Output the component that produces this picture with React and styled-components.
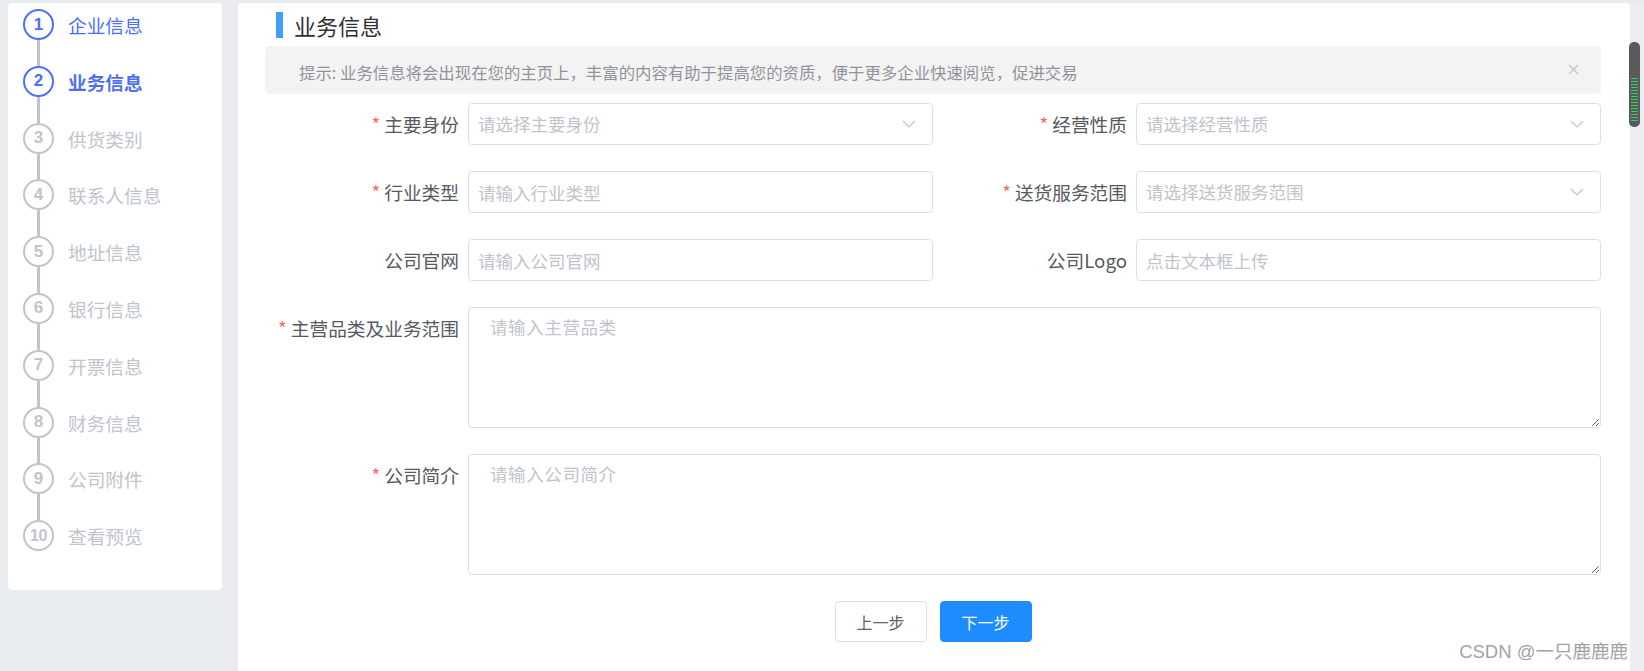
import React from "react";
import styled, { createGlobalStyle } from "styled-components";

const BLUE = "#4f6ef6";
const GREY = "#c0c4cc";

const GlobalStyle = createGlobalStyle`
  * { box-sizing: border-box; }
  html, body {
    margin: 0;
    padding: 0;
    background: #e9ecef;
    font-family: "Noto Sans CJK SC", "Liberation Sans", sans-serif;
  }
`;

const Page = styled.div`
  position: relative;
  display: flex;
  align-items: flex-start;
  height: 671px;
  padding: 3px 0 0 8px;
  overflow: hidden;
`;

/* left steps */
const Sidebar = styled.aside`
  width: 214px;
  height: 587px;
  flex-shrink: 0;
  background: #fff;
  border-radius: 4px;
  padding: 6px 0 0 15px;
`;

const Step = styled.div`
  display: flex;
  gap: 14px;
`;

const Track = styled.div`
  display: flex;
  flex-direction: column;
  align-items: center;
  width: 31px;
`;

const Circle = styled.div`
  width: 31px;
  height: 31px;
  border-radius: 50%;
  border: 2px solid ${(p) => (p.$on ? BLUE : GREY)};
  color: ${(p) => (p.$on ? BLUE : GREY)};
  display: flex;
  align-items: center;
  justify-content: center;
  font-family: "Liberation Sans", Arial, sans-serif;
  font-weight: bold;
  font-size: ${(p) => (p.$wide ? "16px" : "17px")};
  letter-spacing: ${(p) => (p.$wide ? "-0.5px" : "0")};
  background: #fff;
`;

const Connector = styled.div`
  width: 3px;
  height: 25.8px;
  background: ${GREY};
`;

const StepLabel = styled.div`
  line-height: 31px;
  font-size: 18.7px;
  color: ${(p) => (p.$on ? BLUE : GREY)};
  font-weight: ${(p) => (p.$active ? 700 : 400)};
`;

/* main card */
const Main = styled.main`
  width: 1392px;
  height: 668px;
  margin-left: 16px;
  flex-shrink: 0;
  background: #fff;
  border-radius: 4px 4px 0 0;
  padding: 9px 29px 0 27px;
`;

const TitleRow = styled.div`
  display: flex;
  align-items: center;
  gap: 11px;
  height: 26px;
  margin-left: 11px;
`;

const TitleBar = styled.span`
  width: 7px;
  height: 26px;
  background: #409eff;
`;

const Title = styled.h2`
  margin: 0;
  font-size: 22px;
  line-height: 26px;
  font-weight: 400;
  color: #303133;
`;

const Alert = styled.div`
  display: flex;
  align-items: flex-start;
  height: 48px;
  margin-top: 8px;
  padding: 15px 22px 0 34px;
  background: #f3f3f3;
  border-radius: 5px;
`;

const AlertText = styled.div`
  flex: 1;
  font-size: 16.4px;
  line-height: 22px;
  color: #909399;
`;

const CloseBtn = styled.span`
  display: flex;
  align-items: center;
  height: 22px;
  margin-top: -3px;
  cursor: pointer;
`;

const Form = styled.div`
  display: grid;
  grid-template-columns: 1fr 1fr;
  row-gap: 26px;
  margin-top: 9px;
`;

const Item = styled.div`
  display: flex;
  align-items: flex-start;
  grid-column: ${(p) => (p.$full ? "1 / span 2" : "auto")};
`;

const Label = styled.label`
  width: 203px;
  height: 42px;
  flex-shrink: 0;
  padding-right: 9px;
  text-align: right;
  font-size: 18.7px;
  line-height: 42px;
  color: #555a61;
  white-space: nowrap;
`;

const Star = styled.span`
  color: #f56c6c;
  margin-right: 4px;
`;

const Input = styled.input`
  flex: 1;
  min-width: 0;
  height: 42px;
  padding: 0 9px;
  border: 1px solid #dcdfe6;
  border-radius: 4px;
  font-family: inherit;
  font-size: 17.5px;
  color: #606266;
  outline: none;
  &::placeholder {
    color: ${GREY};
  }
`;

const SelectBox = styled.div`
  flex: 1;
  display: flex;
  align-items: center;
  justify-content: space-between;
  height: 42px;
  padding: 0 16px 0 9px;
  border: 1px solid #dcdfe6;
  border-radius: 4px;
  font-size: 17.5px;
  line-height: 24px;
  color: ${GREY};
  cursor: pointer;
`;

const TextArea = styled.textarea`
  display: block;
  flex: 1;
  height: 121px;
  padding: 7px 21px;
  border: 1px solid #dcdfe6;
  border-radius: 4px;
  font-family: inherit;
  font-size: 17.5px;
  line-height: 24px;
  letter-spacing: 0.6px;
  color: #606266;
  resize: vertical;
  outline: none;
  &::placeholder {
    color: ${GREY};
  }
`;

const Actions = styled.div`
  display: flex;
  justify-content: center;
  gap: 13px;
  margin-top: 26px;
`;

const Button = styled.button`
  width: 92px;
  height: 41px;
  border-radius: 4px;
  border: 1px solid ${(p) => (p.$primary ? "#1e8cff" : "#dcdfe6")};
  background: ${(p) => (p.$primary ? "#1e8cff" : "#fff")};
  color: ${(p) => (p.$primary ? "#fff" : "#606266")};
  font-family: inherit;
  font-size: 16px;
  cursor: pointer;
`;

/* fake scrollbar at the right edge */
const ScrollRail = styled.div`
  width: 14px;
  height: 668px;
  flex-shrink: 0;
  background: #eceef1;
  padding-top: 39px;
`;

const Thumb = styled.div`
  width: 11px;
  height: 85px;
  margin-left: -1px;
  border-radius: 5px;
  background: #5a5a5c;
  padding: 36px 2px 4px;
`;

const Stripes = styled.div`
  height: 100%;
  background: repeating-linear-gradient(
    to bottom,
    #2fd35a 0,
    #2fd35a 1px,
    transparent 1px,
    transparent 3px
  );
`;

const Watermark = styled.div`
  position: absolute;
  right: 16px;
  bottom: 8px;
  font-family: "Liberation Sans", "Noto Sans CJK SC", sans-serif;
  font-size: 18.5px;
  line-height: 22px;
  color: #a3a3a3;
  text-shadow: 0 0 2px #fff;
  pointer-events: none;
`;

const Chevron = () => (
  <svg width="14" height="8" viewBox="0 0 14 8">
    <polyline points="1,1 7,7 13,1" fill="none" stroke={GREY} strokeWidth="1.2" />
  </svg>
);

const CloseIcon = () => (
  <svg width="11" height="11" viewBox="0 0 11 11">
    <path d="M1 1L10 10M10 1L1 10" stroke={GREY} strokeWidth="1.2" />
  </svg>
);

const steps = [
  "企业信息",
  "业务信息",
  "供货类别",
  "联系人信息",
  "地址信息",
  "银行信息",
  "开票信息",
  "财务信息",
  "公司附件",
  "查看预览",
];

const Field = ({ label, required, full, children }) => (
  <Item $full={full}>
    <Label>
      {required && <Star>*</Star>}
      {label}
    </Label>
    {children}
  </Item>
);

const Select = ({ placeholder }) => (
  <SelectBox>
    <span>{placeholder}</span>
    <Chevron />
  </SelectBox>
);

export default function App() {
  const current = 1;
  return (
    <>
      <GlobalStyle />
      <Page>
        <Sidebar>
          {steps.map((name, i) => (
            <Step key={name}>
              <Track>
                <Circle $on={i <= current} $wide={i >= 9}>
                  {i + 1}
                </Circle>
                {i < steps.length - 1 && <Connector />}
              </Track>
              <StepLabel $on={i <= current} $active={i === current}>
                {name}
              </StepLabel>
            </Step>
          ))}
        </Sidebar>

        <Main>
          <TitleRow>
            <TitleBar />
            <Title>业务信息</Title>
          </TitleRow>
          <Alert>
            <AlertText>
              提示: 业务信息将会出现在您的主页上，丰富的内容有助于提高您的资质，便于更多企业快速阅览，促进交易
            </AlertText>
            <CloseBtn>
              <CloseIcon />
            </CloseBtn>
          </Alert>

          <Form>
            <Field label="主要身份" required>
              <Select placeholder="请选择主要身份" />
            </Field>
            <Field label="经营性质" required>
              <Select placeholder="请选择经营性质" />
            </Field>
            <Field label="行业类型" required>
              <Input placeholder="请输入行业类型" />
            </Field>
            <Field label="送货服务范围" required>
              <Select placeholder="请选择送货服务范围" />
            </Field>
            <Field label="公司官网">
              <Input placeholder="请输入公司官网" />
            </Field>
            <Field label="公司Logo">
              <Input placeholder="点击文本框上传" readOnly />
            </Field>
            <Field label="主营品类及业务范围" required full>
              <TextArea placeholder="请输入主营品类" />
            </Field>
            <Field label="公司简介" required full>
              <TextArea placeholder="请输入公司简介" />
            </Field>
          </Form>

          <Actions>
            <Button>上一步</Button>
            <Button $primary>下一步</Button>
          </Actions>
        </Main>

        <ScrollRail>
          <Thumb>
            <Stripes />
          </Thumb>
        </ScrollRail>

        <Watermark>CSDN @一只鹿鹿鹿</Watermark>
      </Page>
    </>
  );
}
